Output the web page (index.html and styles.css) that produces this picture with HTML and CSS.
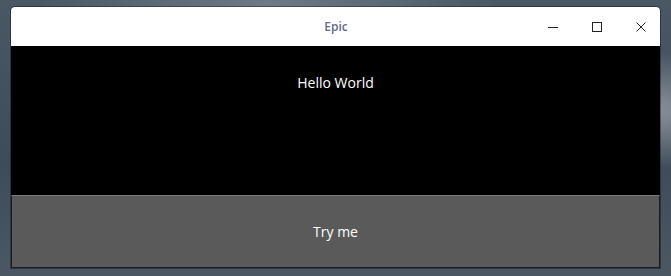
FILE: index.html
```html
<!DOCTYPE html>
<html>
<head>
<meta charset="utf-8">
<link rel="stylesheet" href="styles.css">
</head>
<body>
<div class="desktop">
  <div class="window">
    <div class="titlebar">
      <span class="title">Epic</span>
      <div class="controls">
        <span class="ctl">
          <svg width="12" height="12" viewBox="0 0 12 12"><path d="M1 6.5h10" stroke="#222" stroke-width="1"/></svg>
        </span>
        <span class="ctl">
          <svg width="12" height="12" viewBox="0 0 12 12"><rect x="1.5" y="1.5" width="9" height="9" fill="none" stroke="#222" stroke-width="1"/></svg>
        </span>
        <span class="ctl">
          <svg width="12" height="12" viewBox="0 0 12 12"><path d="M1.5 1.5l9 9M10.5 1.5l-9 9" stroke="#222" stroke-width="1"/></svg>
        </span>
      </div>
    </div>
    <div class="content">
      <div class="label">Hello World</div>
    </div>
    <button class="btn">Try me</button>
  </div>
</div>
</body>
</html>
```
FILE: styles.css
```css
html, body {
  margin: 0;
  padding: 0;
  width: 671px;
  height: 276px;
  overflow: hidden;
}
.desktop {
  width: 671px;
  height: 276px;
  box-sizing: border-box;
  padding: 7px 11px 0 11px;
  background:
    radial-gradient(ellipse at 95% 40%, #8a939c 0%, rgba(138,147,156,0) 25%),
    radial-gradient(ellipse at 40% 0%, #6e7a86 0%, rgba(110,122,134,0) 40%),
    linear-gradient(180deg, #4a5866 0%, #3e4c5a 60%, #4b5864 100%);
}
.window {
  width: 649px;
  height: 261px;
  display: flex;
  flex-direction: column;
  background: #000;
  border-radius: 4px 4px 0 0;
  overflow: hidden;
  box-shadow: 0 0 0 1px rgba(0,0,0,0.35);
}
.titlebar {
  height: 39px;
  flex: none;
  background: #fff;
  position: relative;
  display: flex;
  align-items: center;
  justify-content: center;
}
.title {
  font-family: "Open Sans", "Noto Sans", sans-serif;
  font-size: 12px;
  font-weight: 600;
  color: #6a6888;
  margin-left: 1px;
}
.controls {
  position: absolute;
  right: -3px;
  top: 0;
  height: 39px;
  display: flex;
}
.ctl {
  width: 44px;
  height: 39px;
  display: flex;
  align-items: center;
  justify-content: center;
}
.content {
  height: 149px;
  flex: none;
  display: flex;
  justify-content: center;
  padding-top: 27px;
  box-sizing: border-box;
}
.label {
  font-family: "Open Sans", "Noto Sans", sans-serif;
  font-size: 14px;
  color: #fff;
  height: 20px;
  line-height: 20px;
}
.btn {
  flex: none;
  height: 73px;
  margin: 0;
  background: #5a5a5a;
  border: 1px solid #1c1c1c;
  border-top: 1px solid #7a7a7a;
  color: #fff;
  font-family: "Open Sans", "Noto Sans", sans-serif;
  font-size: 14px;
  padding: 0;
}
```
